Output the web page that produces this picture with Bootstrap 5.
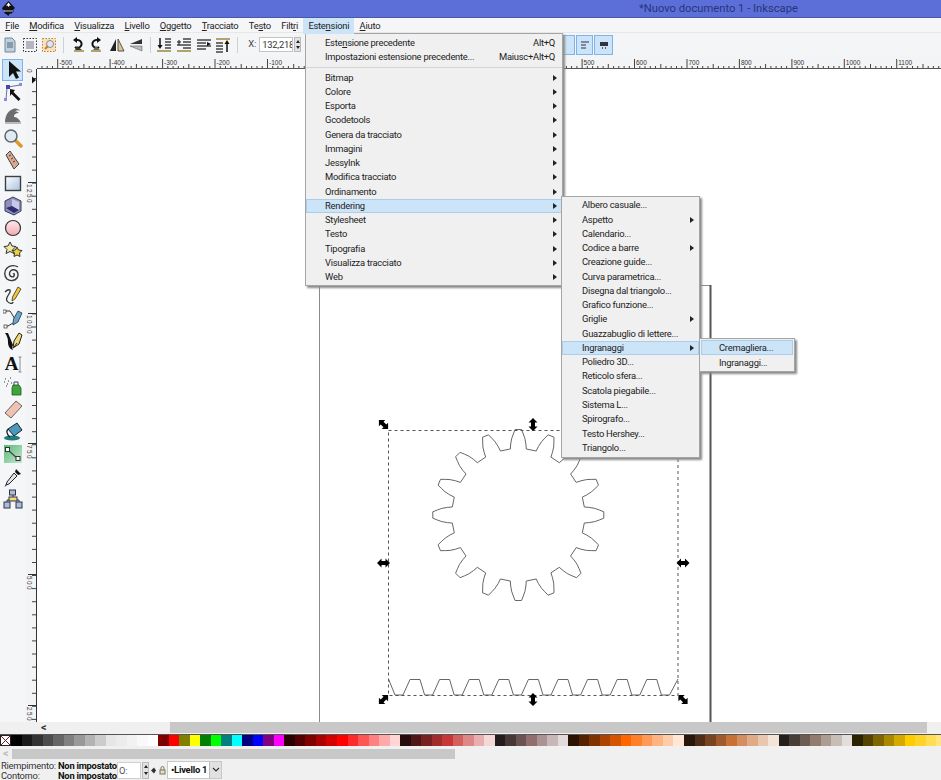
<!DOCTYPE html>
<html lang="it">
<head>
  <meta charset="UTF-8" />
  <title>Nuovo documento 1 - Inkscape</title>
  <meta name="viewport" content="width=device-width, initial-scale=1" />
  <link href="https://cdn.jsdelivr.net/npm/bootstrap@5.3.0/dist/css/bootstrap.min.css" rel="stylesheet">
  <style>
    body {
      background: #f0f0f0;
      font-family: Roboto, "Liberation Sans", sans-serif;
      font-size: 9.4px;
      letter-spacing: -0.25px;
      color: #222;
    }
    .stage { position: relative; width: 941px; height: 780px; overflow: hidden; }

    .title-bar { height: 18px; background: #5c6fd8; border-bottom: 1px solid #4a58a8; padding-left: 1px; }
    .title-text { margin-left: 623px; font-size: 11.2px; letter-spacing: 0; line-height: 17px; color: #27347c; white-space: nowrap; }

    .menu-bar { height: 15px; background: #f5f6f7; border-bottom: 1px solid #e6e7e8; }
    .menu-entry { height: 15px; line-height: 15px; padding: 0 5.2px; color: #222; white-space: nowrap; flex: none; }
    .menu-entry.is-open { background: #cce4f7; height: 16px; position: relative; z-index: 30; }

    .tool-bar { height: 23px; background: #f4f5f6; }
    .tb-btn { width: 19.75px; height: 20px; display: flex; align-items: center; justify-content: center; flex: none; }
    .tb-sep { width: 1px; height: 16px; background: #d0d0d0; margin: 0 3.5px; flex: none; }
    .tb-label { width: 18px; padding-left: 7px; color: #444; flex: none; }
    .num-field { width: 34px; height: 15px; background: #fff; border: 1px solid #c4c4c4; line-height: 13px; padding-left: 2px; flex: none; color: #333; overflow: hidden; white-space: nowrap; }
    .num-spin { width: 7px; height: 15px; margin-left: 1px; background: #e2e2e2; border: 1px solid #bbb; display: flex; flex-direction: column; align-items: center; justify-content: space-around; flex: none; }
    .num-spin i { display: block; width: 0; height: 0; border-left: 2px solid transparent; border-right: 2px solid transparent; }
    .num-spin i.up { border-bottom: 3px solid #222; }
    .num-spin i.down { border-top: 3px solid #222; }
    .snap-group { margin-left: 261px; }
    .snap-btn { height: 20px; background: #cce4f7; border: 1px solid #7eb4ea; display: flex; align-items: center; justify-content: center; margin-right: 1px; flex: none; }
    .snap-a { width: 13px; }
    .snap-b { width: 17px; }
    .snap-c { width: 19px; }

    .main-area { height: 666px; }
    .tool-box { width: 25px; background: #f5f6f7; padding-top: 2.7px; flex: none; }
    .tool-btn { width: 25px; height: 22.6px; display: flex; align-items: center; justify-content: center; }
    .tool-btn.is-active { position: relative; }
    .tool-btn.is-active::before { content: ""; position: absolute; left: 2px; right: 2px; top: 0; bottom: 0; background: #cce4f7; border: 1px solid #7eb4ea; }
    .tool-btn svg { position: relative; }
    .canvas-wrap { position: relative; flex: 1 1 auto; background: #f3f4f5; overflow: hidden; }
    .canvas-svg { position: absolute; left: 0; top: 0; }
    .ruler-text { font-family: "Liberation Sans", sans-serif; font-size: 6.5px; letter-spacing: 0; fill: #333; }
    .ruler-text-v { letter-spacing: 1.4px; }

    .hscroll { height: 12px; background: #f0f0f0; margin-left: 25px; }
    .hscroll-arrow { width: 145px; padding-left: 16px; flex: none; line-height: 11px; font-size: 11px; font-weight: 700; color: #333; }
    .hscroll-thumb { width: 757px; height: 11px; background: #c8c8c8; flex: none; }

    .palette-row { height: 13px; border-top: 1px solid #555; padding-bottom: 1px; background: #f0f0f0; }
    .swatch-none { width: 11px; height: 11px; flex: none; background: #fff; border: 1px solid #222; }
    .swatch { width: 10.52px; height: 11px; flex: none; }

    .pal-scroll { height: 13px; background: #f0f0f0; padding-top: 2px; }
    .pal-arrow { width: 12px; padding-left: 3px; flex: none; line-height: 10px; font-size: 11px; font-weight: 700; color: #bbb; }
    .pal-thumb { width: 443px; height: 10px; background: #c8c8c8; flex: none; }

    .status-bar { height: 20px; background: #f0f0f0; line-height: 9.5px; }
    .fill-grid { grid-template-columns: 57px 60px; padding: 1px 0 0 1px; width: 117px; flex: none; white-space: nowrap; color: #333; }
    .fill-grid b { color: #111; }
    .op-field { width: 24px; height: 17px; background: #fff; border: 1px solid #d0d0d0; color: #555; line-height: 15px; padding-left: 1px; flex: none; }
    .op-spin { height: 17px; width: 7px; }
    .eye-icon { margin-left: 2px; flex: none; }
    .lock-icon { margin-left: 3px; flex: none; }
    .layer-pick { position: relative; margin-left: 1px; width: 55px; height: 18px; background: #fff; border: 1px solid #c8c8c8; font-weight: 700; line-height: 16px; padding-left: 3px; color: #111; flex: none; }
    .layer-caret { position: absolute; right: 0; top: 0; width: 12px; height: 16px; background: #e1e1e1; border-left: 1px solid #bbb; display: flex; align-items: center; justify-content: center; }

    .menu-panel.dropdown-menu {
      position: absolute; margin: 0; min-width: 0; border-radius: 0;
      background: #f0f0f0; border: 1px solid #a5a5a5; box-shadow: 2px 2px 2px #8a8a8a;
      font-size: 9.4px; color: #222; z-index: 20;
    }
    .menu-panel .dropdown-item {
      position: relative; height: 14.27px; line-height: 14.27px; padding: 0 0 0 19px; color: #222;
      white-space: nowrap; background: transparent;
    }
    .menu-panel .dropdown-item.is-hover { background: #cce4f7; box-shadow: 0 0 0 1px #a9cdeb inset; }
    .menu-panel .dropdown-divider { margin: 2px 0 3px 0; border-top: 1px solid #d5d5d5; opacity: 1; }
    .short-key { position: absolute; right: 7px; top: 0; }
    .sub-arrow { position: absolute; right: 5px; top: 4px; width: 0; height: 0; border-top: 3px solid transparent; border-bottom: 3px solid transparent; border-left: 4px solid #222; }
    .menu-panel.panel-main { left: 305px; top: 33px; width: 258px; height: 253px; padding: 2px 0 0; }
    .menu-panel.panel-sub { left: 561px; top: 196px; width: 139px; height: 262px; padding: 1.3px 0 0; }
    .panel-sub .dropdown-item { padding-left: 20px; }
    .menu-panel.panel-third { left: 699px; top: 338px; width: 96px; height: 34px; padding: 1px; }
    .panel-third .dropdown-item { padding-left: 18px; height: 15px; line-height: 15px; }
  </style>
</head>
<body>
<div class="stage d-flex flex-column">

  <div class="title-bar d-flex align-items-center flex-none">
    <svg width="15" height="16" viewBox="0 0 15 16"><path d="M7.5 0 14 7l-2 2 1 1-3 3-1-1-1.500 3L5 13l-2-1 1-2-3-2 .5-1.500z" fill="#111"/><path d="M7.500 1.500 10 5 8.500 4.500 7.500 6 6.500 4.500 5 5z" fill="#fff"/><path d="M3 10h9" stroke="#ccd" stroke-width="1"/></svg>
    <div class="title-text">*Nuovo documento 1 - Inkscape</div>
  </div>

  <div class="menu-bar d-flex flex-none">
    <div class="menu-entry"><u>F</u>ile</div>
    <div class="menu-entry"><u>M</u>odifica</div>
    <div class="menu-entry"><u>V</u>isualizza</div>
    <div class="menu-entry"><u>L</u>ivello</div>
    <div class="menu-entry"><u>O</u>ggetto</div>
    <div class="menu-entry"><u>T</u>racciato</div>
    <div class="menu-entry">Te<u>s</u>to</div>
    <div class="menu-entry">Filt<u>r</u>i</div>
    <div class="menu-entry is-open">Este<u>n</u>sioni</div>
    <div class="menu-entry"><u>A</u>iuto</div>
  </div>

  <div class="tool-bar d-flex align-items-center flex-none">
    <div class="tb-btn"><svg width="14" height="16" viewBox="0 0 14 16"><path d="M2 1h7l3 3v11H2z" fill="#bcd0e0" stroke="#789"/><path d="M4 6h6M4 8h6M4 10h6" stroke="#567"/></svg></div>
    <div class="tb-btn"><svg width="16" height="16" viewBox="0 0 16 16"><rect x="1.500" y="1.500" width="13" height="13" fill="none" stroke="#333" stroke-dasharray="1.500 1.500"/><path d="M4 5h8M4 7h8M4 9h8M4 11h8" stroke="#778"/></svg></div>
    <div class="tb-btn"><svg width="16" height="16" viewBox="0 0 16 16"><rect x="1.500" y="1.500" width="13" height="13" fill="#f7e2bd" stroke="#c97c2a" stroke-dasharray="1.500 1.500"/><circle cx="9" cy="7" r="3.500" fill="#dfe8ee" stroke="#889"/><path d="M4 12l3-3" stroke="#c97c2a" stroke-width="2"/></svg></div>
    <div class="tb-sep"></div>
    <div class="tb-btn"><svg width="16" height="16" viewBox="0 0 16 16"><path d="M5 13h10v2H5z" fill="#b3a26a"/><path d="M8 3a4 4 0 1 1-2 7" fill="none" stroke="#111" stroke-width="2"/><path d="M8 0v6L4 3z" fill="#111"/><path d="M6 13l2-4 5 4z" fill="#333"/></svg></div>
    <div class="tb-btn"><svg width="16" height="16" viewBox="0 0 16 16"><path d="M2 13h10v2H2z" fill="#b3a26a"/><path d="M8 3a4 4 0 1 0 2 7" fill="none" stroke="#111" stroke-width="2"/><path d="M8 0v6l4-3z" fill="#111"/><path d="M4 13l3-4 4 4z" fill="#666"/></svg></div>
    <div class="tb-btn"><svg width="16" height="16" viewBox="0 0 16 16"><path d="M7 2v12H1z" fill="#222"/><path d="M9 2v12h6z" fill="#d8c88e" stroke="#555"/></svg></div>
    <div class="tb-btn"><svg width="16" height="16" viewBox="0 0 16 16"><path d="M14 2v5H2z" fill="#333"/><path d="M14 9v5L2 9z" fill="#bbb" stroke="#666" stroke-width=".6"/></svg></div>
    <div class="tb-sep"></div>
    <div class="tb-btn"><svg width="16" height="16" viewBox="0 0 16 16"><path d="M4 1v8" stroke="#111" stroke-width="1.500"/><path d="M1.500 8h5L4 12z" fill="#111"/><path d="M9 2h6M9 5h6M9 8h6M9 11h6" stroke="#444" stroke-width="1.500"/><path d="M1 14h14" stroke="#b3a26a" stroke-width="2"/></svg></div>
    <div class="tb-btn"><svg width="16" height="16" viewBox="0 0 16 16"><path d="M7 2h8M7 5h8M1 8h14M7 11h8" stroke="#444" stroke-width="1.500"/><path d="M3 3v5M1 5h4" stroke="#111"/><path d="M1 14h14" stroke="#b3a26a" stroke-width="2"/></svg></div>
    <div class="tb-btn"><svg width="16" height="16" viewBox="0 0 16 16"><path d="M1 3h14M1 6h9M1 9h14M1 12h9" stroke="#444" stroke-width="1.500"/><path d="M11 5l4 2-4 2z" fill="#111"/></svg></div>
    <div class="tb-btn"><svg width="16" height="16" viewBox="0 0 16 16"><path d="M1 2h14" stroke="#b3a26a" stroke-width="2"/><path d="M1 6h7M1 9h7M1 12h7M1 15h7" stroke="#444" stroke-width="1.500"/><path d="M12 15V6" stroke="#111" stroke-width="1.500"/><path d="M9.500 7h5L12 3z" fill="#111"/></svg></div>
    <div class="tb-sep"></div>
    <div class="tb-label">X:</div>
    <div class="num-field">132,218</div>
    <div class="num-spin"><i class="up"></i><i class="down"></i></div>
    <div class="snap-group d-flex">
      <div class="snap-btn snap-a"></div>
      <div class="snap-btn snap-b"><svg width="10" height="10" viewBox="0 0 10 10"><path d="M1 2h8M1 5h5M1 8h5" stroke="#334" stroke-width="1.200"/></svg></div>
      <div class="snap-btn snap-c"><svg width="10" height="10" viewBox="0 0 10 10"><path d="M1 2h8v4H1z" fill="#334"/><path d="M3 8h1M6 8h1" stroke="#334" stroke-width="1.500"/></svg></div>
    </div>
  </div>

  <div class="main-area d-flex flex-none">
    <div class="tool-box">
      <div class="tool-btn is-active"><svg width="20" height="20" viewBox="0 0 20 20"><path d="M6 1v16l4-4 3 6 3-1.500-3-6h5z" fill="#111"/></svg></div>
      <div class="tool-btn"><svg width="20" height="20" viewBox="0 0 20 20"><path d="M5 4 17 2M4 5 3 16" stroke="#6a6ab8"/><rect x="3" y="2" width="4" height="4" fill="#4646b0"/><rect x="16" y="0" width="3" height="3" fill="#8a8ad8"/><rect x="1" y="15" width="3" height="3" fill="#8a8ad8"/><path d="M7 6l5 1-1.500 2 7 7-2 2-7-7L7 13z" fill="#111"/></svg></div>
      <div class="tool-btn"><svg width="20" height="20" viewBox="0 0 20 20"><path d="M2 18c0-6 2-12 8-14 3-1 6 0 7 2-2-1-4-1-5 1 1-1 3 0 4 1-3 0-5 1-5 4 2 0 5 1 7 6z" fill="#6d6d6d"/><path d="M2 18h16" stroke="#bbb" stroke-width="2"/></svg></div>
      <div class="tool-btn"><svg width="20" height="20" viewBox="0 0 20 20"><path d="m12 12 6 6" stroke="#d99a2b" stroke-width="3.500" stroke-linecap="round"/><circle cx="8" cy="8" r="6" fill="#dfeaf3" stroke="#5d6570" stroke-width="1.500"/></svg></div>
      <div class="tool-btn"><svg width="20" height="20" viewBox="0 0 20 20"><path d="M7 1 16 14l-5 5L3 5z" fill="#d8a78f" stroke="#444"/><path d="M6 6l2-1M8 9l2-1M10 12l2-1" stroke="#444"/></svg></div>
      <div class="tool-btn"><svg width="20" height="20" viewBox="0 0 20 20"><defs><linearGradient id="rectFill" x1="0" y1="0" x2="1" y2="1"><stop offset="0" stop-color="#fff"/><stop offset="1" stop-color="#a9c1dc"/></linearGradient></defs><rect x="2.500" y="3.500" width="15" height="14" fill="url(#rectFill)" stroke="#3a4048" stroke-width="1.400"/></svg></div>
      <div class="tool-btn"><svg width="20" height="20" viewBox="0 0 20 20"><path d="M10 1 18 5v10l-7 4-9-4V5z" fill="#8f8fbd" stroke="#3a3a55"/><path d="M9 3 16 6v8l-7-3z" fill="#c8c8e6"/><path d="M3 12l6-2 7 4-5 3z" fill="#2d2d70"/></svg></div>
      <div class="tool-btn"><svg width="20" height="20" viewBox="0 0 20 20"><defs><linearGradient id="ballFill" x1="0" y1="0" x2="0" y2="1"><stop offset="0" stop-color="#fdeaec"/><stop offset="1" stop-color="#f3a9b3"/></linearGradient></defs><circle cx="10" cy="10" r="7.500" fill="url(#ballFill)" stroke="#333" stroke-width="1.200"/></svg></div>
      <div class="tool-btn"><svg width="20" height="20" viewBox="0 0 20 20"><path d="m7 1 2 4 4 .5-3 3 1 4-4-2-4 2 1-4-3-3 4-.5z" fill="#efe6a0" stroke="#333"/><path d="m14 6 1.500 3 3.500.5-2.500 2.500.5 3.500-3-1.500-3 1.500.5-3.500L9 9.500l3.500-.5z" fill="#f0cf3c" stroke="#333"/></svg></div>
      <div class="tool-btn"><svg width="20" height="20" viewBox="0 0 20 20"><path d="M10 11c1-1 2 0 1 2-1 1.500-4 1-4.500-1.500C6 8 9 6 12 7c3 1 4 5 2 8-2 3-7 3.500-10 1C1 13 1 8 4 5c3-3 8-3 11-1" fill="none" stroke="#3a3a3a" stroke-width="1.400"/></svg></div>
      <div class="tool-btn"><svg width="20" height="20" viewBox="0 0 20 20"><path d="M2 6c3-3 6-3 5 0S2 12 4 15s6 3 6 1" fill="none" stroke="#333" stroke-width="1.300"/><path d="m15 1 3 2-6 10-3 2 .5-4z" fill="#f3c935" stroke="#333" stroke-width=".8"/></svg></div>
      <div class="tool-btn"><svg width="20" height="20" viewBox="0 0 20 20"><path d="M1 2h6l5 8M1 17h4l5-3" fill="none" stroke="#333"/><rect x="0" y="1" width="3" height="3" fill="#fff" stroke="#333" stroke-width=".7"/><rect x="1" y="16" width="3" height="3" fill="#fff" stroke="#333" stroke-width=".7"/><path d="m15 2 4 2-4 9-5 3 .5-6z" fill="#6aa6c8" stroke="#234" stroke-width=".8"/></svg></div>
      <div class="tool-btn"><svg width="20" height="20" viewBox="0 0 20 20"><path d="M2 2c2 3 3 5 3 9 0 3 1 7 5 8-1-2-1-3 0-5L5 2z" fill="#111"/><path d="m16 2 3 2-3 9-6 4 1-7z" fill="#efd878" stroke="#222"/><path d="m11 16 3-4" stroke="#222"/></svg></div>
      <div class="tool-btn"><svg width="20" height="20" viewBox="0 0 20 20"><text x="8.500" y="16" text-anchor="middle" font-family="Liberation Serif, serif" font-weight="700" font-size="19" fill="#111">A</text><path d="M17 3v15M15.500 3h3M15.500 18h3" stroke="#777" stroke-width=".8"/></svg></div>
      <div class="tool-btn"><svg width="20" height="20" viewBox="0 0 20 20"><path d="M10 9h6l2 3v7H9v-7z" fill="#3fa53a" stroke="#1d5c1c" stroke-width=".8"/><path d="M11 9V6h4v3" fill="none" stroke="#445"/><path d="M2 3h1M5 5h1M1 6h1M4 8h1M7 2h1M8 7h1M3 10h1" stroke="#333" stroke-width="1.200"/></svg></div>
      <div class="tool-btn"><svg width="20" height="20" viewBox="0 0 20 20"><path d="M13 2 19 7 8 19l-6-5z" fill="#f1c1b2" stroke="#666"/></svg></div>
      <div class="tool-btn"><svg width="20" height="20" viewBox="0 0 20 20"><ellipse cx="9" cy="17" rx="8" ry="2.500" fill="#1f7d77"/><path d="M5 8 14 2l5 7-8 6z" fill="#4e97bc" stroke="#123"/><path d="M5 8c-2 2-1 6 2 8" fill="none" stroke="#123" stroke-width="1.200"/></svg></div>
      <div class="tool-btn"><svg width="20" height="20" viewBox="0 0 20 20"><defs><linearGradient id="gradFill" x1="0" y1="0" x2="1" y2="1"><stop offset="0" stop-color="#57b878"/><stop offset="1" stop-color="#c6e8cf"/></linearGradient></defs><rect x="1" y="1" width="18" height="18" fill="url(#gradFill)"/><path d="m5 6 10 9" stroke="#444" stroke-width="1.200"/><rect x="2.500" y="3.500" width="4" height="4" fill="#fff" stroke="#333"/><rect x="13" y="12.500" width="4" height="4" fill="#fff" stroke="#333"/></svg></div>
      <div class="tool-btn"><svg width="20" height="20" viewBox="0 0 20 20"><path d="m13 2 5 5-3 1-3-3z" fill="#111"/><path d="m11 6 3 3-8 8-3 1 1-3z" fill="#dfe4ea" stroke="#222"/><path d="M3 18 2 19.500" stroke="#222"/></svg></div>
      <div class="tool-btn"><svg width="20" height="20" viewBox="0 0 20 20"><path d="M10 6v3M4 13v-2h12v2" fill="none" stroke="#334"/><rect x="6.500" y="1" width="6" height="5" fill="#a8bfdc" stroke="#334"/><rect x="6" y="8" width="8" height="4" fill="#f0dc78" stroke="#334"/><rect x="1" y="13" width="6" height="6" fill="#a8bfdc" stroke="#334"/><rect x="13" y="13" width="6" height="6" fill="#a8bfdc" stroke="#334"/></svg></div>
    </div>

    <div class="canvas-wrap">
      <svg class="canvas-svg" width="916" height="666" viewBox="25 56 916 666">
        <rect x="37" y="69" width="904" height="653" fill="#fff"/>
        <g id="rulers"></g>
        <path d="M319.500 722V285.500H710" fill="none" stroke="#8a8a8a"/>
        <path d="M710.500 285V722" stroke="#555" stroke-width="2"/>
        <path id="gearShape" fill="none" stroke="#555" stroke-width=".9"/>
        <path id="rackShape" fill="none" stroke="#555" stroke-width=".9"/>
        <rect x="388.500" y="430.500" width="289.500" height="265" fill="none" stroke="#555" stroke-dasharray="3 3"/>
        <g fill="#000" id="handles"></g>
      </svg>
    </div>
  </div>

  <div class="hscroll d-flex flex-none">
    <div class="hscroll-arrow">&lt;</div>
    <div class="hscroll-thumb"></div>
  </div>

  <div class="palette-row d-flex flex-none" id="paletteRow">
    <div class="swatch-none"><svg class="d-block" width="9" height="9" viewBox="0 0 9 9"><path d="M0 0l9 9M9 0 0 9" stroke="#7a1c1c"/></svg></div>
  </div>

  <div class="pal-scroll d-flex flex-none">
    <div class="pal-arrow">&lt;</div>
    <div class="pal-thumb"></div>
  </div>

  <div class="status-bar d-flex align-items-center flex-none">
    <div class="fill-grid d-grid">
      <span>Riempimento:</span><b>Non impostato</b>
      <span>Contorno:</span><b>Non impostato</b>
    </div>
    <div class="op-field">O:</div>
    <div class="num-spin op-spin"><i class="up"></i><i class="down"></i></div>
    <svg class="eye-icon" width="5" height="9" viewBox="0 0 5 9"><path d="M0 4.500 3 1.500 5 4.500 3 7.500z" fill="#333"/></svg>
    <svg class="lock-icon" width="7" height="9" viewBox="0 0 7 9"><rect x="1" y="4" width="5" height="4" fill="#e8e0b8" stroke="#776"/><path d="M2 4V2a1.500 1.500 0 0 1 3 0v2" fill="none" stroke="#776"/></svg>
    <div class="layer-pick">&bull;Livello 1
      <div class="layer-caret"><svg width="8" height="6" viewBox="0 0 8 6"><path d="m1 1 3 3 3-3" fill="none" stroke="#333" stroke-width="1.200"/></svg></div>
    </div>
  </div>

  <div class="dropdown-menu show menu-panel panel-main">
    <a class="dropdown-item">Este<u>n</u>sione precedente<span class="short-key">Alt+Q</span></a>
    <a class="dropdown-item">Impostazioni estensione precedente...<span class="short-key">Maiusc+Alt+Q</span></a>
    <hr class="dropdown-divider">
    <a class="dropdown-item">Bitmap<span class="sub-arrow"></span></a>
    <a class="dropdown-item">Colore<span class="sub-arrow"></span></a>
    <a class="dropdown-item">Esporta<span class="sub-arrow"></span></a>
    <a class="dropdown-item">Gcodetools<span class="sub-arrow"></span></a>
    <a class="dropdown-item">Genera da tracciato<span class="sub-arrow"></span></a>
    <a class="dropdown-item">Immagini<span class="sub-arrow"></span></a>
    <a class="dropdown-item">JessyInk<span class="sub-arrow"></span></a>
    <a class="dropdown-item">Modifica tracciato<span class="sub-arrow"></span></a>
    <a class="dropdown-item">Ordinamento<span class="sub-arrow"></span></a>
    <a class="dropdown-item is-hover">Rendering<span class="sub-arrow"></span></a>
    <a class="dropdown-item">Stylesheet<span class="sub-arrow"></span></a>
    <a class="dropdown-item">Testo<span class="sub-arrow"></span></a>
    <a class="dropdown-item">Tipografia<span class="sub-arrow"></span></a>
    <a class="dropdown-item">Visualizza tracciato<span class="sub-arrow"></span></a>
    <a class="dropdown-item">Web<span class="sub-arrow"></span></a>
  </div>

  <div class="dropdown-menu show menu-panel panel-sub">
    <a class="dropdown-item">Albero casuale...</a>
    <a class="dropdown-item">Aspetto<span class="sub-arrow"></span></a>
    <a class="dropdown-item">Calendario...</a>
    <a class="dropdown-item">Codice a barre<span class="sub-arrow"></span></a>
    <a class="dropdown-item">Creazione guide...</a>
    <a class="dropdown-item">Curva parametrica...</a>
    <a class="dropdown-item">Disegna dal triangolo...</a>
    <a class="dropdown-item">Grafico funzione...</a>
    <a class="dropdown-item">Griglie<span class="sub-arrow"></span></a>
    <a class="dropdown-item">Guazzabuglio di lettere...</a>
    <a class="dropdown-item is-hover">Ingranaggi<span class="sub-arrow"></span></a>
    <a class="dropdown-item">Poliedro 3D...</a>
    <a class="dropdown-item">Reticolo sfera...</a>
    <a class="dropdown-item">Scatola piegabile...</a>
    <a class="dropdown-item">Sistema L...</a>
    <a class="dropdown-item">Spirografo...</a>
    <a class="dropdown-item">Testo Hershey...</a>
    <a class="dropdown-item">Triangolo...</a>
  </div>

  <div class="dropdown-menu show menu-panel panel-third">
    <a class="dropdown-item is-hover">Cremagliera...</a>
    <a class="dropdown-item">Ingranaggi...</a>
  </div>
</div>

<script src="https://cdn.jsdelivr.net/npm/bootstrap@5.3.0/dist/js/bootstrap.bundle.min.js"></script>
<script>
  // Inkscape default palette, in the order of the swatch strip
  const paletteColors = ('000000 1a1a1a 333333 4d4d4d 666666 808080 999999 b3b3b3 cccccc e6e6e6 ececec f2f2f2 f9f9f9 ffffff ' +
    '800000 ff0000 808000 ffff00 008000 00ff00 008080 00ffff 000080 0000ff 800080 ff00ff ' +
    '2b0000 550000 800000 aa0000 d40000 ff0000 ff2a2a ff5555 ff8080 ffaaaa ffd5d5 ' +
    '280b0b 501616 782121 a02c2c c83737 d35f5f de8787 e9afaf f4d7d7 ' +
    '241c1c 483737 6c5353 916f6f ac9393 c8b7b7 e3dbdb ' +
    '2b1100 552200 803300 aa4400 d45500 ff6600 ff7f2a ff9955 ffb380 ffccaa ffe6d5 ' +
    '28170b 502d16 784421 a05a2c c87137 d38d5f deaa87 e9c6af f4e3d7 ' +
    '241f1c 483e37 6c5d53 917c6f ac9d93 c8beb7 e3dedb ' +
    '2b2200 554400 806600 aa8800 d4aa00 ffcc00 ffd42a ffdd55 ffe680').split(' ');
  const paletteRow = document.getElementById('paletteRow');
  paletteColors.forEach((hex) => {
    const cell = document.createElement('div');
    cell.className = 'swatch';
    cell.style.background = '#' + hex;
    paletteRow.appendChild(cell);
  });

  // Rulers. Labels under the open menu are not drawn, they can't be seen anyway
  let rulerMarks = '<rect x="37" y="68" width="904" height="1" fill="#555"/><rect x="36" y="69" width="1" height="653" fill="#333"/>';
  for (let i = -55; i <= 118; i++) {
    const x = 319.4 + i * 5.244;
    if (x < 40) continue;
    const isMajor = i % 10 === 0;
    const tickTop = isMajor ? 59 : (i % 5 === 0 ? 64 : 66);
    rulerMarks += `<rect x="${x.toFixed(1)}" y="${tickTop}" width="1" height="${68 - tickTop}" fill="#444"/>`;
    if (isMajor && (x < 280 || x > 563)) rulerMarks += `<text class="ruler-text" x="${(x + 2).toFixed(1)}" y="65">${i * 10}</text>`;
  }
  for (let y = 78; y < 722; y += 13.08) {
    rulerMarks += `<rect x="32" y="${y.toFixed(1)}" width="4" height="1" fill="#444"/>`;
  }
  rulerMarks += '<path d="M32 76.500v7l4-3.500z" fill="#111"/>';
  // 1500 sits mostly above the ruler, only its last digit shows
  rulerMarks += '<text class="ruler-text" transform="translate(26.500 69) rotate(90)">0</text>';
  [[182, '1250'], [313, '1000'], [443, '750'], [574, '500'], [705, '250']].forEach(([y, label]) => {
    rulerMarks += `<rect x="28" y="${y}" width="8" height="1" fill="#333"/>`;
    rulerMarks += `<text class="ruler-text ruler-text-v" transform="translate(26.500 ${y + 2}) rotate(90)">${label}</text>`;
  });
  document.getElementById('rulers').innerHTML = rulerMarks;

  // Gear with 16 teeth, one tooth straight up
  const gearX = 518.3, gearY = 515;
  const toothProfile = [[66, -8], [71, -7.6], [76.5, -6.6], [81, -5], [85.5, -3.2], [85.5, 3.2], [81, 5], [76.5, 6.6], [71, 7.6], [66, 8]];
  let gearPath = '';
  for (let t = 0; t < 16; t++) {
    const a = t * Math.PI / 8;
    toothProfile.forEach(([r, w]) => {
      const px = gearX + w * Math.cos(a) + r * Math.sin(a);
      const py = gearY + w * Math.sin(a) - r * Math.cos(a);
      gearPath += (gearPath ? 'L' : 'M') + px.toFixed(1) + ' ' + py.toFixed(1);
    });
  }
  document.getElementById('gearShape').setAttribute('d', gearPath + 'Z');

  // Rack along the bottom of the selection box
  let rackPath = 'M388.500 679L395 695';
  for (let x = 395; x < 650; x += 29.6) {
    rackPath += `L${(x + 8).toFixed(1)} 695L${(x + 15).toFixed(1)} 679.5L${(x + 25).toFixed(1)} 679.5L${(x + 29.6).toFixed(1)} 695`;
  }
  document.getElementById('rackShape').setAttribute('d', rackPath + 'L669.500 695L678 679');

  // Selection handles: x, y, rotation
  const arrowShape = 'M0-6.500 4.500-2H2V2H4.500L0 6.500-4.500 2H-2V-2H-4.500Z';
  let handleMarks = '';
  [[533, 424.5, 0], [533, 699.5, 0], [383.5, 563, 90], [683, 563, 90],
   [383.5, 424.5, -45], [683, 699.5, -45], [383.5, 699.5, 45], [683, 424.5, 45]].forEach(([x, y, deg]) => {
    handleMarks += `<path transform="translate(${x} ${y}) rotate(${deg})" d="${arrowShape}"/>`;
  });
  document.getElementById('handles').innerHTML = handleMarks;
</script>
</body>
</html>
